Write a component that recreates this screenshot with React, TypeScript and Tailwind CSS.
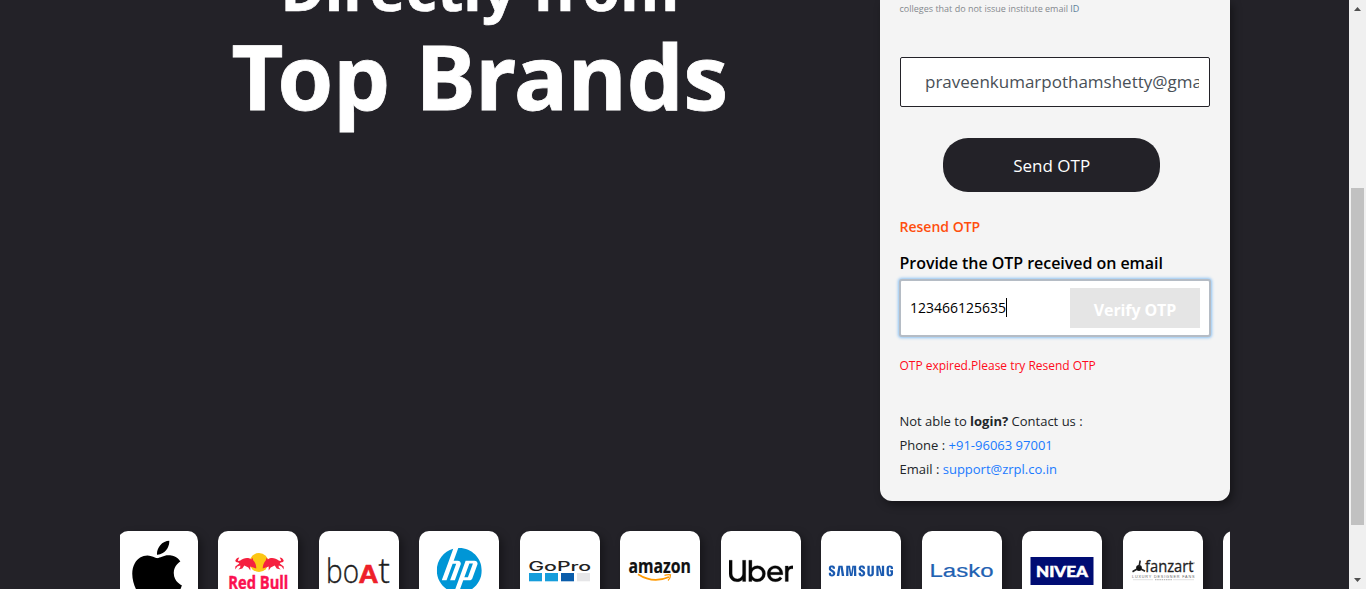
import React from "react";
import { SiApple, SiHp, SiUber, SiSamsung } from "react-icons/si";

function Logo({ children }: { children: React.ReactNode }) {
  return (
    <div className="h-[80px] w-[80px] shrink-0 rounded-[10px] bg-white shadow-[4px_4px_8px_rgba(0,0,0,0.35)]">
      <svg viewBox="0 0 80 80" className="block h-[80px] w-[80px]">
        {children}
      </svg>
    </div>
  );
}

const bull =
  "M0 4 C1 2 2 1 4 1 L3 3 C2 4 3 5 5 4 C8 2 12 0 16 3 L17 1 L18 4 C20 6 21 9 21 12 L18 11 L15 10 L15 14 L13 11 L9 9 L7 12 L3 13 L5 11 L5 9 L2 10 L0 13 L0 10 L4 7 L3 6 C1 6 0 5 0 4 Z";

function Logos() {
  return (
    <div className="ml-[120px] h-[58px] w-[1130px]">
      <div className="-mt-[10px] h-[68px] w-[1110px] overflow-hidden pt-[10px]">
        <div className="-ml-[2.2px] flex w-[1300px] gap-[20.5px]">
          <Logo>
            <SiApple x={8.6} y={9.6} size={61} color="#000" />
          </Logo>
          <Logo>
            <circle cx="41" cy="31.5" r="9.5" fill="#fcc614" />
            <path d={bull} transform="translate(17.3 25.5)" fill="#f5203f" />
            <path d={bull} transform="translate(65.7 25.5) scale(-1 1)" fill="#f5203f" />
            <text x="10.3" y="57.6" textLength="60" lengthAdjust="spacingAndGlyphs" fill="#fb1150" stroke="#fb1150" strokeWidth="0.4" fontFamily="Open Sans" fontWeight="700" fontSize="17">Red Bull</text>
          </Logo>
          <Logo>
            <text x="7.1" y="52" textLength="33" lengthAdjust="spacingAndGlyphs" fill="#1c1c1c" stroke="#1c1c1c" strokeWidth="0.4" fontFamily="Open Sans" fontWeight="300" fontSize="33">bo</text>
            <text x="39.5" y="52" textLength="20" lengthAdjust="spacingAndGlyphs" fill="#ee2029" stroke="#ee2029" strokeWidth="0.6" fontFamily="Liberation Sans" fontWeight="700" fontSize="26">A</text>
            <text x="59.6" y="52" textLength="11.4" lengthAdjust="spacingAndGlyphs" fill="#1c1c1c" stroke="#1c1c1c" strokeWidth="0.4" fontFamily="Open Sans" fontWeight="300" fontSize="34">t</text>
          </Logo>
          <Logo>
            <SiHp x={17.8} y={17} size={45} color="#0096d6" />
          </Logo>
          <Logo>
            <text x="8.2" y="40" textLength="63" lengthAdjust="spacingAndGlyphs" fill="#222" fontFamily="Inter" fontWeight="500" fontSize="12.5">GoPro</text>
            <rect x="9" y="42" width="13" height="8.3" fill="#159ddb" />
            <rect x="25" y="42" width="13" height="8.3" fill="#159ddb" />
            <rect x="41" y="42" width="13" height="8.3" fill="#0a5dab" />
            <rect x="57" y="42" width="13" height="8.3" fill="#e6e6e8" />
          </Logo>
          <Logo>
            <text x="8.5" y="42" textLength="62.5" lengthAdjust="spacingAndGlyphs" fill="#111" stroke="#111" strokeWidth="0.2" fontFamily="Open Sans" fontWeight="700" fontSize="19">amazon</text>
            <path d="M18 43.3 Q33 53 49 46" fill="none" stroke="#f90" strokeWidth="1.7" />
            <path d="M44.5 44.3 Q48 43.3 50.5 43.8 Q50.7 47 48 49.5" fill="none" stroke="#f90" strokeWidth="1.2" />
          </Logo>
          <Logo>
            <SiUber x={8} y={8} size={64} color="#060606" stroke="#060606" strokeWidth={0.1} />
          </Logo>
          <Logo>
            <g transform="translate(7.6 0) scale(1 1.12)">
              <SiSamsung x={0} y={3.4} size={64.5} color="#1a5ab0" />
            </g>
          </Logo>
          <Logo>
            <text x="7.5" y="46" textLength="64" lengthAdjust="spacingAndGlyphs" fill="#1f62b2" stroke="#1f62b2" strokeWidth="0.2" fontFamily="Liberation Sans" fontSize="18">Lasko</text>
          </Logo>
          <Logo>
            <rect x="8.5" y="26" width="63" height="28" fill="#000c73" />
            <text x="14" y="46" textLength="52" lengthAdjust="spacingAndGlyphs" fill="#fff" stroke="#fff" strokeWidth="0.5" fontFamily="Lato" fontWeight="900" fontSize="15.5">NIVEA</text>
          </Logo>
          <Logo>
            <circle cx="16" cy="37" r="2.9" fill="#111" />
            <path d="M16 36 L17.2 29.5 M14 38 L9.5 40.8 M18 38 L22 40.3" stroke="#222" strokeWidth="1.6" />
            <text x="22" y="41.2" textLength="48.5" lengthAdjust="spacingAndGlyphs" fill="#222" stroke="#222" strokeWidth="0.3" fontFamily="Open Sans" fontSize="16">fanzart</text>
            <circle cx="71" cy="32" r="0.7" fill="#888" />
            <text x="9" y="46.6" textLength="62.5" lengthAdjust="spacing" fill="#666" fontFamily="Liberation Sans" fontSize="3.8">LUXURY DESIGNER FANS</text>
            <path d="M10 48.7 H30 M50 48.7 H71" stroke="#ccc" strokeWidth="0.6" />
            <path d="M32 48.7 H49" stroke="#bbb" strokeWidth="1.3" strokeDasharray="1.5 0.7" />
          </Logo>
          <Logo>{null}</Logo>
        </div>
      </div>
    </div>
  );
}

function LoginCard() {
  return (
    <section className="flex h-[501px] w-[350px] flex-col rounded-b-[12px] bg-[#f4f4f4] px-[20px] shadow-[3px_4px_8px_rgba(0,0,0,0.4)]">
      <p className="-ml-[0.5px] h-[57px] pt-[2px] text-[9px] leading-[14px] whitespace-nowrap text-[#84898e]">
        colleges that do not issue institute email <span className="text-[#60819a]">ID</span>
      </p>
      <div className="flex h-[50px] items-center rounded-[2px] border border-[#232228] bg-white pr-[10px] pl-[24px]">
        <div className="overflow-hidden text-[17px] leading-[28px] text-[#495057]">praveenkumarpothamshetty@gmail.com</div>
      </div>
      <button className="mt-[31.4px] ml-[43px] h-[54px] w-[217.4px] rounded-[25px] bg-[#232228] pt-[1.5px] text-[17px] text-white">Send OTP</button>
      <a className="mt-[24.6px] -ml-[0.5px] h-[20px] text-[14px] leading-[20px] font-semibold text-[#ff4e0d]">Resend OTP</a>
      <label className="mt-[14px] -ml-[0.5px] h-[24px] text-[16px] leading-[24px] font-semibold tracking-[-0.04px] text-black">Provide the OTP received on email</label>
      <div className="-mx-px mt-[4px] flex h-[58px] shrink-0 items-center justify-between rounded-[3px] border-2 border-[#b5bcc5] bg-white pr-[9px] pl-[9px] shadow-[0_0_3px_1px_#8fc3f3]">
        <div className="flex items-center text-[14px] leading-[20px] text-black">
          123466125635
          <span className="h-[19px] w-px bg-black" />
        </div>
        <button className="h-[40px] w-[130px] bg-[#e5e5e5] pt-[4px] text-[16px] font-bold tracking-[-0.1px] text-white">Verify OTP</button>
      </div>
      <p className="mt-[19px] -ml-[0.5px] h-[20px] text-[12px] leading-[20px] tracking-[-0.02px] text-[#ff0b20]">OTP expired.Please try Resend OTP</p>
      <div className="mt-[33px] -ml-[0.5px] text-[13px] leading-[24px] text-[#212529]">
        <p>Not able to <b>login?</b> Contact us :</p>
        <p>Phone : <a className="text-[#1a7aff]">+91-96063 97001</a></p>
        <p>Email : <a className="text-[#1a7aff]">support@zrpl.co.in</a></p>
      </div>
    </section>
  );
}

export default function App() {
  return (
    <div className="flex h-[589px] w-[1366px] overflow-hidden bg-[#232228] font-['Open_Sans',sans-serif]">
      <main className="w-[1349px]">
        <div className="flex h-[531px] justify-between pr-[119px] pl-[120px]">
          <h1 className="flex w-[720px] flex-col items-center font-['Noto_Sans',sans-serif] font-bold text-white">
            <span className="-mt-[50px] h-[75px] text-[60px] leading-[76px] tracking-[0.45px] whitespace-nowrap [-webkit-text-stroke:0.7px_white]">Directly from</span>
            <span className="h-[100px] text-[90px] leading-[100px] whitespace-nowrap [-webkit-text-stroke:0.8px_white] [word-spacing:2px]">Top Brands</span>
          </h1>
          <LoginCard />
        </div>
        <Logos />
      </main>
      <aside className="flex w-[17px] flex-col items-center bg-[#f0f0f0]">
        <svg viewBox="0 0 17 17" className="h-[17px] w-[17px]"><path d="M5 11 L8.5 7 L12 11 Z" fill="#505050" /></svg>
        <div className="mt-[171px] h-[337px] w-[13px] bg-[#c1c1c1]" />
        <div className="grow" />
        <svg viewBox="0 0 17 17" className="h-[17px] w-[17px]"><path d="M5 6 L8.5 10 L12 6 Z" fill="#505050" /></svg>
      </aside>
    </div>
  );
}
